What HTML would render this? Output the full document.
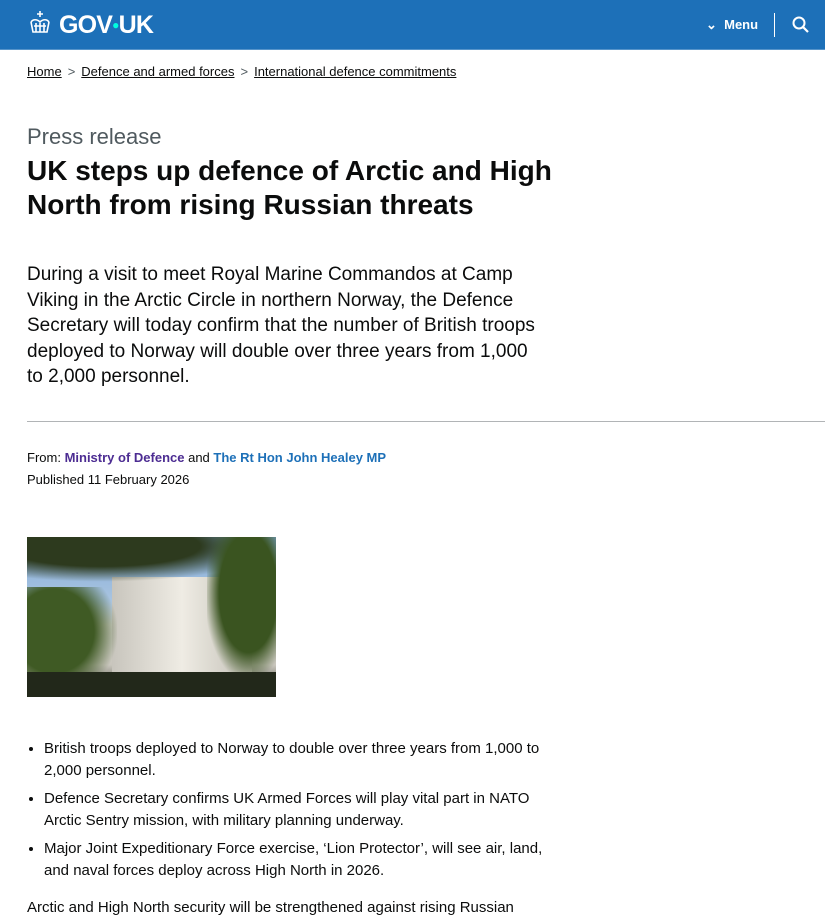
<!DOCTYPE html>
<html><head><meta charset="utf-8"><style>
body{margin:0;background:#fff;font-family:"Liberation Sans",Arial,sans-serif;color:#0b0c0c;width:825px;height:919px;overflow:hidden;position:relative}
.hdr{position:absolute;left:0;top:0;width:825px;height:49px;background:#1d70b8;border-bottom:1px solid #5694ca}
.logo{position:absolute;left:27px;top:10px;color:#fff;font-weight:bold;font-size:25px;letter-spacing:-0.8px}
.abs{position:absolute}
a{color:#0b0c0c}
.bc{top:64px;left:27px;font-size:13px}
.bc a{text-decoration:underline}
.bc span{margin:0 6px;color:#505a5f}
h1{position:absolute;left:27px;top:154px;margin:0;font-size:28px;line-height:34px;font-weight:bold;width:540px}
.lead{left:27px;top:262px;font-size:19px;line-height:25.5px;width:512px}
ul{position:absolute;left:27px;top:738px;margin:0;padding:0 0 0 17px;font-size:15px;line-height:22px;width:515px}
li{margin-bottom:6px}
</style></head><body>
<div class="hdr">
<div class="logo"><svg width="26" height="26" viewBox="0 0 26 26" style="vertical-align:-3px;margin-right:6px"><g fill="none" stroke="#fff" stroke-width="1.6"><path d="M13 1v6M10 4h6"/><path d="M4 12c2-3 6-3 9 0c3-3 7-3 9 0"/><path d="M4 12l2 10h14l2-10"/><path d="M7 16h12M9 13v9M13 13v9M17 13v9"/></g></svg>GOV<span style="color:#00ffe0;font-size:12px;vertical-align:4px">●</span>UK</div>
<div class="abs" style="left:706px;top:17px;color:#fff;font-size:13px;font-weight:bold">⌄&nbsp; Menu</div>
<div class="abs" style="left:774px;top:13px;width:1px;height:24px;background:#fff"></div>
<svg class="abs" style="left:792px;top:16px" width="18" height="18" viewBox="0 0 18 18"><circle cx="7" cy="7" r="5.5" fill="none" stroke="#fff" stroke-width="2"/><path d="M11 11l5 5" stroke="#fff" stroke-width="2.2"/></svg>
</div>
<div class="abs bc"><a>Home</a><span>&gt;</span><a>Defence and armed forces</a><span>&gt;</span><a>International defence commitments</a></div>
<div class="abs" style="left:27px;top:124px;font-size:22px;color:#505a5f">Press release</div>
<h1>UK steps up defence of Arctic and High North from rising Russian threats</h1>
<div class="abs lead">During a visit to meet Royal Marine Commandos at Camp Viking in the Arctic Circle in northern Norway, the Defence Secretary will today confirm that the number of British troops deployed to Norway will double over three years from 1,000 to 2,000 personnel.</div>
<div class="abs" style="left:27px;top:421px;width:798px;height:1px;background:#b1b4b6"></div>
<div class="abs" style="left:27px;top:450px;font-size:13px">From: <a style="color:#4c2c92;font-weight:bold">Ministry of Defence</a> and <a style="color:#1d70b8;font-weight:bold">The Rt Hon John Healey MP</a></div>
<div class="abs" style="left:27px;top:472px;font-size:13px">Published 11 February 2026</div>
<div class="abs" style="left:27px;top:537px;width:249px;height:160px;overflow:hidden;background:linear-gradient(180deg,#7fa9d8 0%,#a9c4e0 40%,#d8d6d0 55%,#c9c6bd 80%,#2a2e20 100%)">
<div class="abs" style="left:85px;top:40px;width:140px;height:95px;background:linear-gradient(90deg,#c8c5bd,#efece4 50%,#c2bfb6);"></div>
<div class="abs" style="left:0;top:0;width:249px;height:45px;background:radial-gradient(ellipse at 30% 20%,#2d3a1e 40%,transparent 70%)"></div>
<div class="abs" style="left:0;top:50px;width:90px;height:110px;background:radial-gradient(ellipse at 30% 40%,#3f5a24 45%,transparent 72%)"></div>
<div class="abs" style="left:180px;top:0;width:69px;height:140px;background:radial-gradient(ellipse at 60% 40%,#3a5420 50%,transparent 75%)"></div>
<div class="abs" style="left:0;top:135px;width:249px;height:25px;background:#22281a"></div>
</div>
<ul>
<li>British troops deployed to Norway to double over three years from 1,000 to 2,000 personnel.</li>
<li>Defence Secretary confirms UK Armed Forces will play vital part in NATO Arctic Sentry mission, with military planning underway.</li>
<li>Major Joint Expeditionary Force exercise, ‘Lion Protector’, will see air, land, and naval forces deploy across High North in 2026.</li>
</ul>
<div class="abs" style="left:27px;top:899px;font-size:15px">Arctic and High North security will be strengthened against rising Russian</div>
</body></html>
